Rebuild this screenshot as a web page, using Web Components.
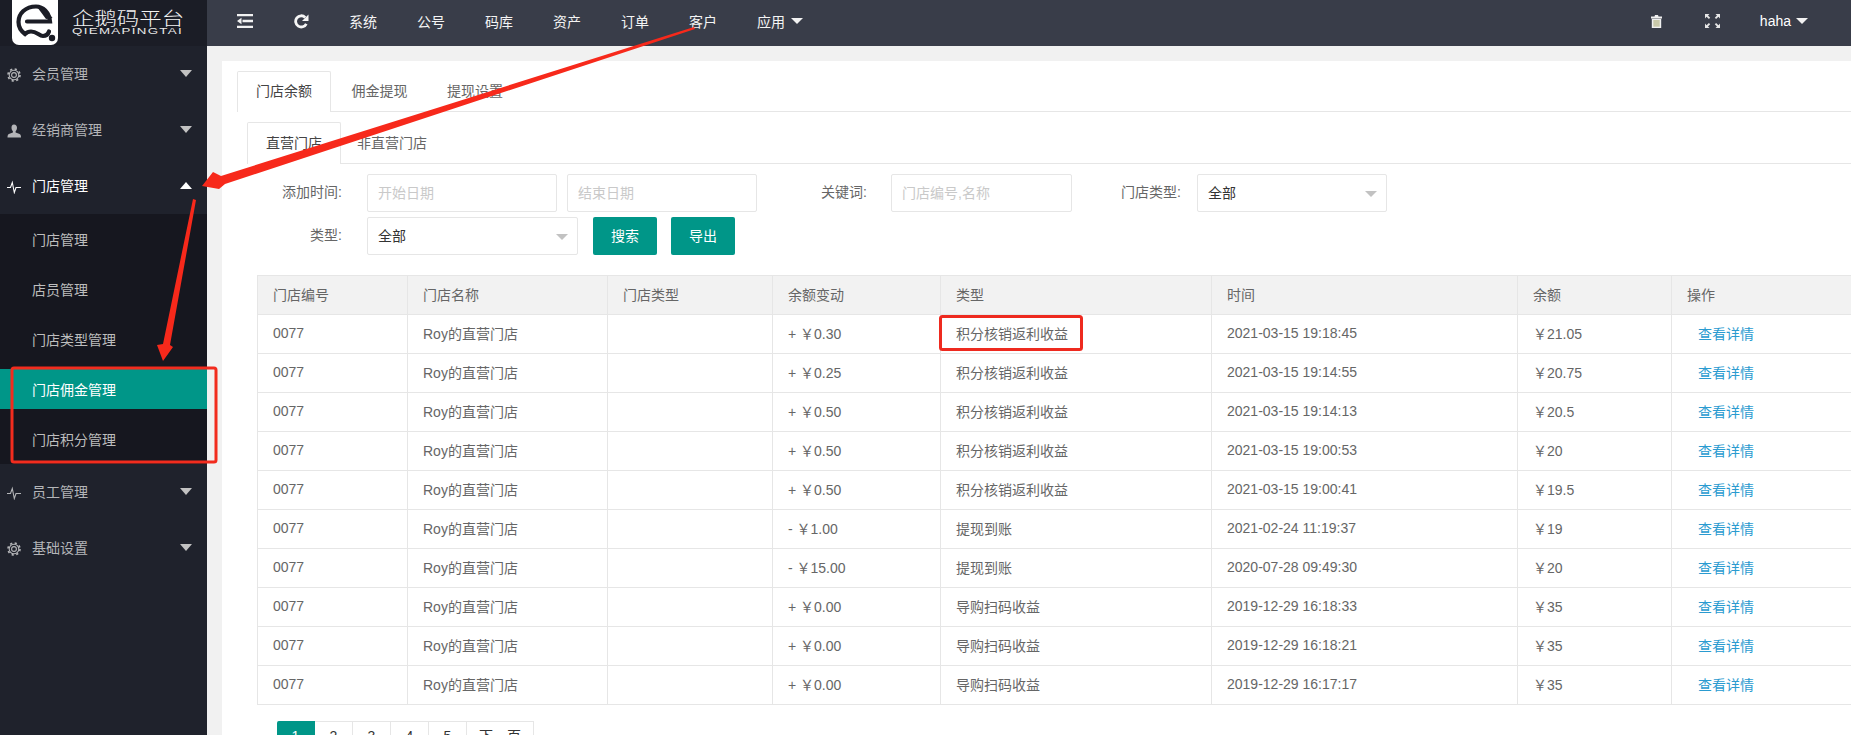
<!DOCTYPE html>
<html lang="zh">
<head>
<meta charset="utf-8">
<title>门店佣金管理</title>
<style>
    html, body { margin: 0; height: 100%; overflow: hidden; background: #f1f1f1; }
    body {
        font: 14px "Liberation Sans", "Noto Sans CJK SC", sans-serif;
        color: #666;
        position: relative;
    }
    .page { display: grid; grid-template-columns: 207px 1fr; grid-template-rows: 46px 1fr; height: 735px; }
</style>
</head>
<body>
<div class="page">
    <qm-logo></qm-logo>
    <qm-topbar></qm-topbar>
    <qm-sidebar></qm-sidebar>
    <qm-main>
        <qm-tabs items="门店余额,佣金提现,提现设置"></qm-tabs>
        <qm-tabs sub items="直营门店,非直营门店"></qm-tabs>
        <qm-filter></qm-filter>
        <qm-table></qm-table>
        <qm-pager></qm-pager>
    </qm-main>
</div>
<qm-marks></qm-marks>

<script>
const ICONS = {
    gear: `<svg width="14" height="14" viewBox="0 0 14 14" fill="none" stroke="currentColor"><circle cx="7" cy="7" r="2.4" stroke-width="1.1"/><circle cx="7" cy="7" r="4.8" stroke-width="1.1"/><circle cx="7" cy="7" r="6" stroke-width="1.6" stroke-dasharray="2.2 2.51"/></svg>`,
    user: `<svg width="14" height="14" viewBox="0 0 14 14" fill="currentColor"><path d="M7 0.5c1.9 0 3 1.4 3 3.3 0 1.5-.6 2.8-1.4 3.5v1.2c1.6.7 4 1.2 4.9 2.3.4.6.5 1.6.5 2.7H.5c0-1.1.1-2.1.5-2.7.9-1.1 3.3-1.6 4.9-2.3V7.3C5.100 6.600 4.500 5.300 4.500 3.800 4.500 1.900 5.100.5 7 .5z"/></svg>`,
    pulse: `<svg width="14" height="14" viewBox="0 0 14 14" fill="none" stroke="currentColor" stroke-width="1.1"><path d="M0 7.500h3.500L5.300 2.500 7.300 12.500 9 7.500h5"/></svg>`
};

const caret = (dir, color, w = 6, h = 7) => `<i style="display:block;width:0;height:0;border-left:${w}px solid transparent;border-right:${w}px solid transparent;${dir === 'up' ? `border-bottom:${h}px solid ${color}` : `border-top:${h}px solid ${color}`}"></i>`;

class QmLogo extends HTMLElement {
    constructor() {
        super();
        this.attachShadow({ mode: 'open' }).innerHTML = `
            <style>
                :host { display: flex; align-items: flex-start; background: #1b1d26; overflow: hidden; height: 46px; }
                svg { display: block; margin-left: 12px; flex: none; }
                .name { margin-left: 14px; color: #f2f2f2; width: 114px; }
                .cn { font: 300 18px/18px "Noto Sans CJK SC", sans-serif; margin-top: 8px; white-space: nowrap; width: 90px; transform: scaleX(1.245); transform-origin: left center; }
                .en { font: 9.500px/10px "Liberation Sans", sans-serif; letter-spacing: .95px; white-space: nowrap; width: 80px; color: #e8e8e8; transform: scaleX(1.4); transform-origin: left center; }
            </style>
            <svg width="46" height="45" viewBox="0 0 46 45">
                <path d="M0-4h46v42a7 7 0 0 1-7 7H7a7 7 0 0 1-7-7z" fill="#fff"/>
                <g fill="none" stroke="#1b1d26" stroke-width="4.200" stroke-linecap="round">
                    <path d="M15 21.500H38C37 12 31 6.500 24 6.500 13.500 6.500 6.500 13.500 6.500 22c0 5 2.500 9 6.500 12 1.500-1.500 3-2.500 6-2.500 6 0 8 4.500 12 4.500 3.500 0 5-1.500 6-4.500"/>
                </g>
                <path d="M24 5.500c6 0 10 3.500 16.500 12.500L34 19z" fill="#1b1d26"/>
                <circle cx="27" cy="14.500" r="1.400" fill="#fff"/>
                <circle cx="40" cy="38" r="3.200" fill="#1b1d26"/>
            </svg>
            <div class="name"><div class="cn">企鹅码平台</div><div class="en">QIEMAPINGTAI</div></div>
        `;
    }
}

class QmTopbar extends HTMLElement {
    constructor() {
        super();
        const links = ['系统', '公号', '码库', '资产', '订单', '客户'].map(t => `<a>${t}</a>`).join('');
        this.attachShadow({ mode: 'open' }).innerHTML = `
            <style>
                :host { display: flex; align-items: center; background: #393d49; color: #fff; padding-bottom: 4px; box-sizing: border-box; height: 46px; }
                svg { display: block; flex: none; }
                .fold { margin-left: 30px; }
                .reload { margin-left: 41px; }
                .links { display: flex; margin-left: 20px; }
                a { width: 68px; padding-left: 20px; box-sizing: border-box; color: #f4f4f4; white-space: nowrap; }
                .app { display: flex; align-items: center; gap: 6px; margin-left: 0; padding-left: 20px; color: #f4f4f4; }
                .right { margin-left: auto; display: flex; align-items: center; }
                .trash { margin-right: 42px; }
                .full { margin-right: 40px; }
                .user { display: flex; align-items: center; gap: 5px; margin-right: 43px; }
            </style>
            <svg class="fold" width="16" height="14" viewBox="0 0 16 14" fill="#f2f2f2"><path d="M0 0h16v2.200H0zM0 11.800h16V14H0zM5.500 5.800H16V8.200H5.500zM0 7l4.500-3.200v6.400z"/></svg>
            <svg class="reload" width="15" height="15" viewBox="0 0 15 15" fill="none"><path d="M12.300 9.800A5.600 5.600 0 1 1 11.200 3.400" stroke="#f6f6f6" stroke-width="2.800"/><path d="M14.500 0.500V7H8z" fill="#f6f6f6"/></svg>
            <div class="links">${links}</div>
            <div class="app"><span>应用</span>${caret('down', '#f2f2f2', 6, 6)}</div>
            <div class="right">
                <svg class="trash" width="13" height="13" viewBox="0 0 13 13"><path d="M1 1.500h3.500L5 0h3l.5 1.500H12v2H1z" fill="#f0f0f0"/><path d="M1.800 3.800h9.400V13H1.800z" fill="#f0f0f0"/><path d="M3.300 5h6.400v6.700H3.300z" fill="#c9c9aa"/></svg>
                <svg class="full" width="15" height="14" viewBox="0 0 15 14" fill="#e6e6e6"><path d="M0 0h4.500L3 1.500 5.200 3.700 3.900 5 1.500 2.800 0 4.500zM15 0h-4.500L12 1.500 9.800 3.700 11.100 5 13.500 2.800 15 4.500zM0 14h4.500L3 12.500 5.200 10.300 3.900 9 1.500 11.200 0 9.500zM15 14h-4.500L12 12.500 9.800 10.300 11.100 9 13.500 11.200 15 9.500z"/></svg>
                <div class="user"><span>haha</span>${caret('down', '#f2f2f2', 6, 6)}</div>
            </div>
        `;
    }
}

class QmSidebar extends HTMLElement {
    constructor() {
        super();
        const head = (icon, text, open) => `
            <div class="item ${open ? 'open' : ''}">
                ${ICONS[icon]}<span>${text}</span>
                <b>${caret(open ? 'up' : 'down', open ? '#fff' : '#c2c2c2')}</b>
            </div>`;
        const subs = ['门店管理', '店员管理', '门店类型管理', '门店佣金管理', '门店积分管理']
            .map(t => `<div class="sub ${t === '门店佣金管理' ? 'on' : ''}">${t}</div>`).join('');
        this.attachShadow({ mode: 'open' }).innerHTML = `
            <style>
                :host { display: block; background: #1f222c; color: #b4b5b8; overflow: hidden; }
                .item { height: 56px; display: flex; align-items: center; padding: 0 0 2px 7px; box-sizing: border-box; }
                .item svg { flex: none; margin-top: 3px; }
                .item span { margin-left: 11px; }
                .item b { margin-left: auto; margin-right: 15px; }
                .open { color: #fff; }
                .list { background: #16171f; display: flex; flex-direction: column; gap: 10px; padding: 5px 0; }
                .sub { height: 40px; line-height: 42px; padding-left: 32px; color: #bdbdbd; }
                .on { background: #009688; color: #fff; }
            </style>
            ${head('gear', '会员管理')}
            ${head('user', '经销商管理')}
            ${head('pulse', '门店管理', true)}
            <div class="list">${subs}</div>
            ${head('pulse', '员工管理')}
            ${head('gear', '基础设置')}
        `;
    }
}

class QmMain extends HTMLElement {
    constructor() {
        super();
        this.attachShadow({ mode: 'open' }).innerHTML = `
            <style>
                :host { display: block; padding: 15px 0 0 15px; overflow: hidden; min-width: 0; }
                .card { background: #fff; padding: 10px 0 0 15px; height: 700px; width: 1700px; box-sizing: border-box; }
            </style>
            <div class="card"><slot></slot></div>
        `;
    }
}

class QmTabs extends HTMLElement {
    constructor() {
        super();
        const items = this.getAttribute('items').split(',');
        this.attachShadow({ mode: 'open' }).innerHTML = `
            <style>
                :host { display: flex; height: 41px; border-bottom: 1px solid #e6e6e6; box-sizing: border-box; gap: 1.500px; }
                :host([sub]) { margin: 10px 0 10px 10px; gap: 0; height: 42px; }
                div { padding: 0 18px; line-height: 38px; box-sizing: border-box; height: 41px; color: #666; border: 1px solid transparent; border-bottom: 0; }
                :host([sub]) div { height: 42px; line-height: 40px; }
                :host([sub]) div + div { margin-left: -3px; }
                .on { background: #fff; border-color: #e6e6e6; border-radius: 2px 2px 0 0; color: #444; }
            </style>
            ${items.map((t, i) => `<div class="${i === 0 ? 'on' : ''}">${t}</div>`).join('')}
        `;
    }
}

class QmFilter extends HTMLElement {
    constructor() {
        super();
        this.attachShadow({ mode: 'open' }).innerHTML = `
            <style>
                :host { display: block; margin-left: 10px; }
                .row { display: flex; height: 38px; line-height: 36px; margin-bottom: 5px; }
                label { text-align: right; white-space: nowrap; color: #666; flex: none; }
                .box { border: 1px solid #e6e6e6; border-radius: 2px; box-sizing: border-box; flex: none; padding-left: 10px; color: #c9c9c9; position: relative; }
                .sel { color: #333; }
                .sel i { position: absolute; right: 9px; top: 16px; width: 0; height: 0; border: 6px solid transparent; border-top: 6px solid #c2c2c2; border-bottom: 0; }
                button { all: unset; box-sizing: border-box; flex: none; width: 64px; height: 38px; text-align: center; background: #009688; color: #fff; border-radius: 2px; }
            </style>
            <div class="row">
                <label style="width:95px;margin-right:25px">添加时间:</label>
                <div class="box" style="width:190px;margin-right:10px">开始日期</div>
                <div class="box" style="width:190px">结束日期</div>
                <label style="width:110px;margin-right:24px">关键词:</label>
                <div class="box" style="width:181px">门店编号,名称</div>
                <label style="width:109px;margin-right:16px">门店类型:</label>
                <div class="box sel" style="width:190px">全部<i></i></div>
            </div>
            <div class="row">
                <label style="width:95px;margin-right:25px">类型:</label>
                <div class="box sel" style="width:211px;margin-right:15px">全部<i></i></div>
                <button style="margin-right:14px">搜索</button>
                <button>导出</button>
            </div>
        `;
    }
}

class QmTable extends HTMLElement {
    constructor() {
        super();
        const cols = [150, 200, 165, 168, 271, 306, 154, 190];
        const heads = ['门店编号', '门店名称', '门店类型', '余额变动', '类型', '时间', '余额', '操作'];
        const rows = [
            ['+ ￥0.30', '积分核销返利收益', '2021-03-15 19:18:45', '￥21.05'],
            ['+ ￥0.25', '积分核销返利收益', '2021-03-15 19:14:55', '￥20.75'],
            ['+ ￥0.50', '积分核销返利收益', '2021-03-15 19:14:13', '￥20.5'],
            ['+ ￥0.50', '积分核销返利收益', '2021-03-15 19:00:53', '￥20'],
            ['+ ￥0.50', '积分核销返利收益', '2021-03-15 19:00:41', '￥19.5'],
            ['- ￥1.00', '提现到账', '2021-02-24 11:19:37', '￥19'],
            ['- ￥15.00', '提现到账', '2020-07-28 09:49:30', '￥20'],
            ['+ ￥0.00', '导购扫码收益', '2019-12-29 16:18:33', '￥35'],
            ['+ ￥0.00', '导购扫码收益', '2019-12-29 16:18:21', '￥35'],
            ['+ ￥0.00', '导购扫码收益', '2019-12-29 16:17:17', '￥35']
        ];
        const body = rows.map(r => `<tr><td>0077</td><td>Roy的直营门店</td><td></td>${r.map(c => `<td>${c}</td>`).join('')}<td><a>查看详情</a></td></tr>`).join('');
        this.attachShadow({ mode: 'open' }).innerHTML = `
            <style>
                :host { display: block; margin: 20px 0 0 20px; }
                table { border-collapse: collapse; table-layout: fixed; width: ${cols.reduce((a, b) => a + b)}px; }
                th, td { height: 39px; box-sizing: border-box; padding: 0 15px 2px; border: 1px solid #e6e6e6; font-weight: normal; text-align: left; color: #666; white-space: nowrap; }
                th { background: #f2f2f2; }
                a { color: #2a9bd0; margin-left: 11px; }
            </style>
            <table>
                <colgroup>${cols.map(w => `<col style="width:${w}px">`).join('')}</colgroup>
                <tr>${heads.map(h => `<th>${h}</th>`).join('')}</tr>
                ${body}
            </table>
        `;
    }
}

class QmPager extends HTMLElement {
    constructor() {
        super();
        this.attachShadow({ mode: 'open' }).innerHTML = `
            <style>
                :host { display: flex; margin: 16px 0 0 40px; color: #333; }
                div { height: 38px; line-height: 28px; width: 38px; text-align: center; box-sizing: border-box; border: 1px solid #e6e6e6; border-left: 0; }
                .on { background: #009688; color: #fff; border-color: #009688; border-radius: 2px 0 0 2px; }
                .next { width: 67px; }
            </style>
            <div class="on">1</div><div>2</div><div>3</div><div>4</div><div>5</div><div class="next">下一页</div>
        `;
    }
}

// red annotations pasted over the screenshot
class QmMarks extends HTMLElement {
    constructor() {
        super();
        this.attachShadow({ mode: 'open' }).innerHTML = `
            <style>
                :host { display: block; position: absolute; inset: 0; pointer-events: none; }
                svg { display: block; }
            </style>
            <svg width="1851" height="735" viewBox="0 0 1851 735">
                <polygon points="694,27 695,29 225,184 219,189 202,186 213,172 221,176" fill="#f7291b"/>
                <polygon points="193,199 196,200 170,345 173,347 163,361 157,345 163,344" fill="#f7291b"/>
                <rect x="12" y="368" width="204" height="94" rx="2" fill="none" stroke="#f22c1e" stroke-width="3"/>
                <rect x="940.500" y="316.500" width="141" height="33" rx="2" fill="none" stroke="#ee2a1f" stroke-width="3"/>
            </svg>
        `;
    }
}

customElements.define('qm-logo', QmLogo);
customElements.define('qm-topbar', QmTopbar);
customElements.define('qm-sidebar', QmSidebar);
customElements.define('qm-main', QmMain);
customElements.define('qm-tabs', QmTabs);
customElements.define('qm-filter', QmFilter);
customElements.define('qm-table', QmTable);
customElements.define('qm-pager', QmPager);
customElements.define('qm-marks', QmMarks);
</script>
</body>
</html>
